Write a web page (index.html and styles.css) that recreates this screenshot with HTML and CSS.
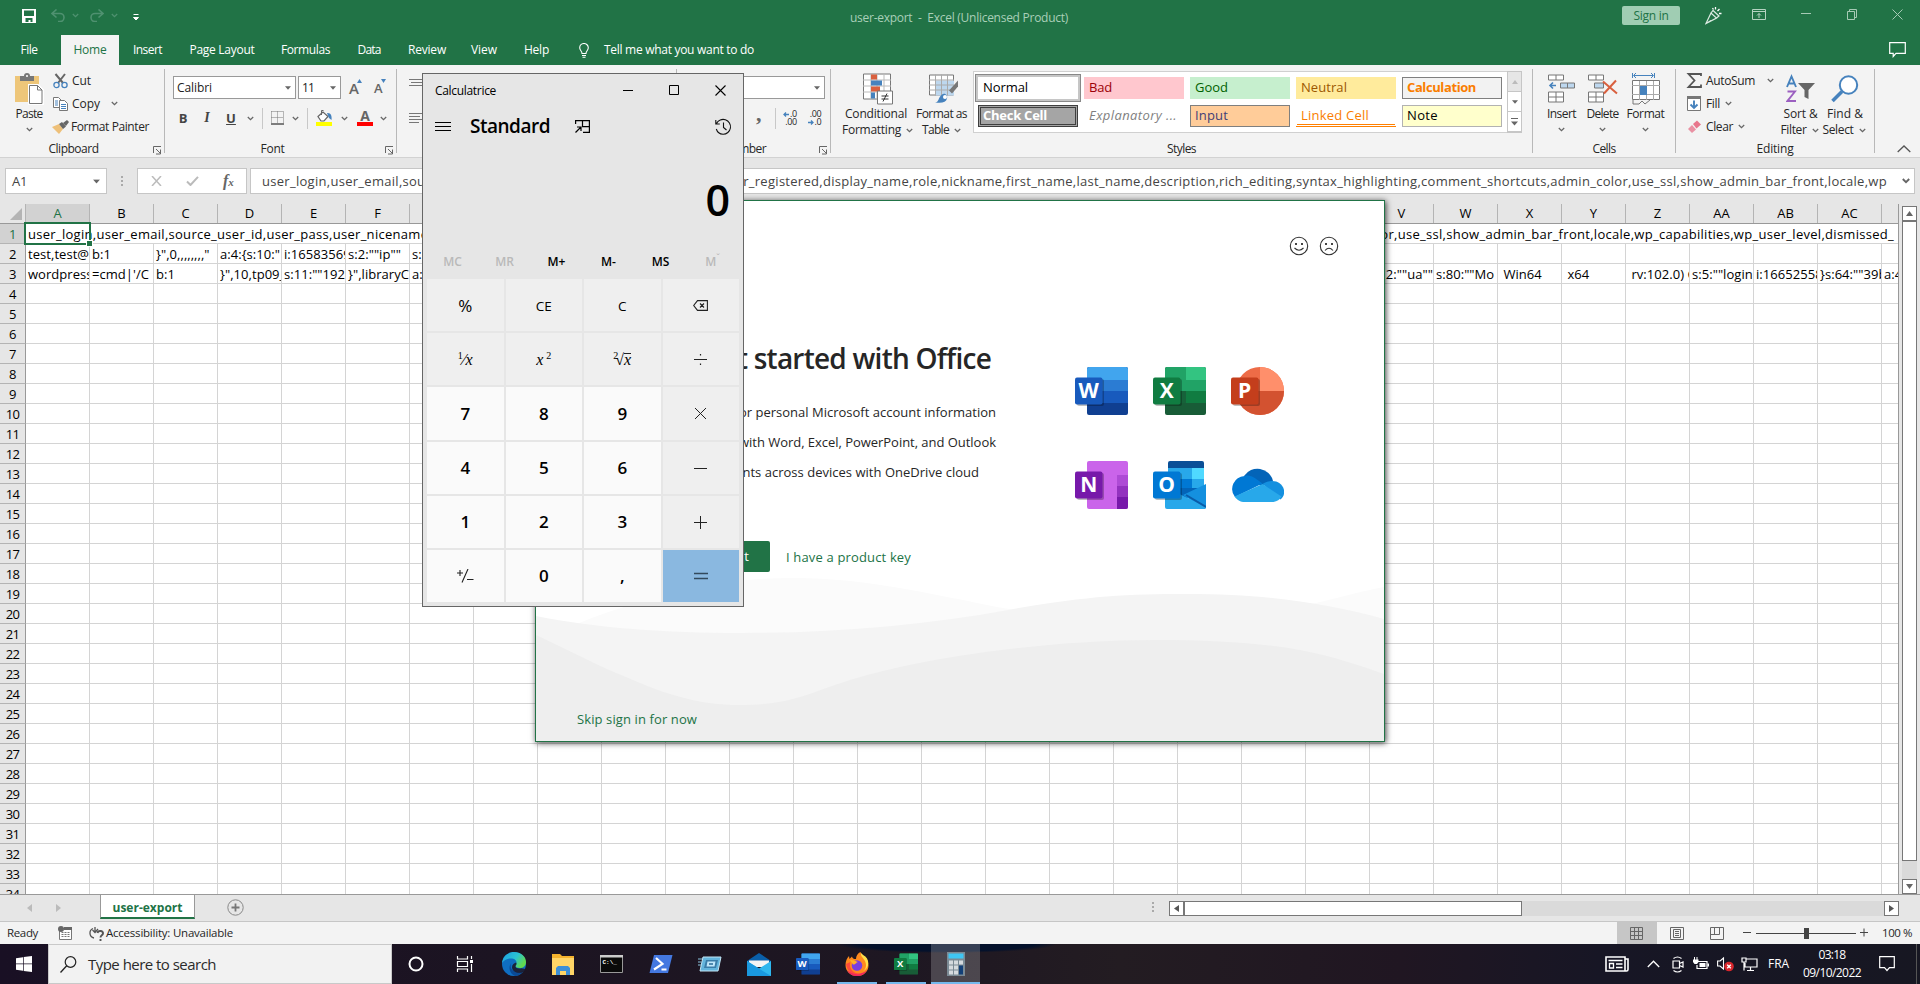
FILE: index.html
```html
<!DOCTYPE html>
<html lang="en">
<head>
<meta charset="utf-8">
<title>user-export - Excel</title>
<link rel="stylesheet" href="styles.css">
</head>
<body>
<svg class="defs" width="0" height="0">
  <symbol id="chev" viewBox="0 0 7 5"><path d="M.8 1l2.7 2.6L6.2 1" fill="none" stroke="currentColor" stroke-width="1.3"/></symbol>
  <symbol id="tri" viewBox="0 0 6 4"><path d="M0 .3h6L3 3.7z" fill="currentColor"/></symbol>
  <symbol id="launch" viewBox="0 0 9 9"><path d="M.5 7V.5H8M3 3l4 4M7.5 3.5v4.500h-4.500" fill="none" stroke="#666"/></symbol>
  <symbol id="word" viewBox="0 0 53 48"><rect x="12" width="41" height="48" rx="2" fill="#103f91"/><path d="M12 24h41v12H12z" fill="#185abd"/><path d="M12 12h41v12H12z" fill="#2b7cd3"/><path d="M14 0h37a2 2 0 012 2v11H12V2a2 2 0 012-2z" fill="#41a5ee"/><rect x="2" y="12" width="27" height="27" rx="2" fill="#000" opacity=".25"/><rect y="10.500" width="27.500" height="27" rx="2" fill="#185abd"/><text x="13.700" y="31" text-anchor="middle" class="logo">W</text></symbol>
  <symbol id="excel" viewBox="0 0 53 48"><rect x="12" width="41" height="48" rx="2" fill="#185c37"/><path d="M12 24h21v12H12z" fill="#17623a"/><path d="M33 24h20v12H33z" fill="#107c41"/><path d="M14 0h19v24H12V2a2 2 0 012-2z" fill="#21a366"/><path d="M33 13h20v11H33z" fill="#21a366"/><path d="M33 0h18a2 2 0 012 2v11H33z" fill="#33c481"/><rect x="2" y="12" width="27" height="27" rx="2" fill="#000" opacity=".25"/><rect y="10.500" width="27.500" height="27" rx="2" fill="#107c41"/><text x="13.700" y="31" text-anchor="middle" class="logo">X</text></symbol>
  <symbol id="ppt" viewBox="0 0 53 48"><circle cx="29" cy="24" r="24" fill="#ed6c47"/><path d="M29 0a24 24 0 0124 24H29z" fill="#ff8f6b"/><path d="M5 24h48a24 24 0 01-48 0z" fill="#d35230"/><rect x="2" y="12" width="27" height="27" rx="2" fill="#000" opacity=".25"/><rect y="10.500" width="27.500" height="27" rx="2" fill="#c43e1c"/><text x="13.700" y="31" text-anchor="middle" class="logo">P</text></symbol>
  <symbol id="onenote" viewBox="0 0 53 48"><rect x="12" width="41" height="48" rx="2" fill="#ca64ea"/><path d="M42 14h11v11H42z" fill="#ae4bd5"/><path d="M42 25h11v11H42z" fill="#9332bf"/><path d="M42 36h11v10a2 2 0 01-2 2h-9z" fill="#7719aa"/><rect x="2" y="12" width="27" height="27" rx="2" fill="#000" opacity=".25"/><rect y="10.500" width="27.500" height="27" rx="2" fill="#7719aa"/><text x="13.700" y="31" text-anchor="middle" class="logo">N</text></symbol>
  <symbol id="outlook" viewBox="0 0 53 48"><path d="M15 2a2 2 0 012-2h32a2 2 0 012 2v5H15z" fill="#0a4f97"/><path d="M15 7h24v11H15z" fill="#28a8ea"/><path d="M39 7h12v11H39z" fill="#50d9ff"/><path d="M15 18h24v9H15z" fill="#0078d4"/><path d="M39 18h12v9H39z" fill="#28a8ea"/><path d="M15 27h36v10H15z" fill="#0364b8"/><path d="M53 23v23a2 2 0 01-2 2L30 34z" fill="#1490df"/><path d="M12 26l41 20a2 2 0 01-2 2H14a2 2 0 01-2-2z" fill="#28a8ea"/><path d="M53 46L33 34" stroke="#0a5ca8" stroke-width="2"/><rect x="2" y="12" width="27" height="27" rx="2" fill="#000" opacity=".25"/><rect y="10.500" width="27.500" height="27" rx="2" fill="#0078d4"/><text x="13.700" y="31" text-anchor="middle" class="logo">O</text></symbol>
</svg>

<header class="titlebar">
  <div class="quick">
    <svg width="14" height="14" viewBox="0 0 14 14"><path d="M0 0h14v14H0z" fill="#fff"/><path d="M2 1.500h10V7H2zM3.500 9h7v4h-2v-2h-2v2h-3z" fill="#217346"/></svg>
    <svg class="undo" width="14" height="13" viewBox="0 0 14 13"><path d="M5.500.5L1 4.500l4.500 4M1.500 4.500H9a4 4 0 010 8H7" fill="none" stroke="#4f9170" stroke-width="1.600"/></svg>
    <svg class="undo-more" width="7" height="5"><use href="#chev"/></svg>
    <svg class="redo" width="14" height="13" viewBox="0 0 14 13"><path d="M8.500.5L13 4.500l-4.500 4M12.500 4.500H5a4 4 0 000 8h2" fill="none" stroke="#4f9170" stroke-width="1.600"/></svg>
    <svg class="undo-more" width="7" height="5"><use href="#chev"/></svg>
    <svg class="customize" width="6" height="7" viewBox="0 0 6 7"><path d="M.5.500h5M.500 3.500h5L3 6z" stroke="#fff" fill="#fff"/></svg>
  </div>
  <div class="doc-title"><span data-w="218">user-export&nbsp; -&nbsp; Excel (Unlicensed Product)</span></div>
  <div class="window-tools">
    <div class="signin"><span data-w="35">Sign in</span></div>
    <svg class="pen" width="17" height="18" viewBox="0 0 17 18"><path d="M1 16.500L6 6l5.500 5zM6 6l2-2.500 6 5.500-2.500 2M1 16.500l5-3" fill="none" stroke="#dcebe2" stroke-width="1.200"/><path d="M10.500 0v2.500M12.500 4l2-2M14 6.500h2.500M7.500 1l1 1.500" stroke="#fff" stroke-width="1.300"/></svg>
    <svg class="ribbon-opt" width="14" height="11" viewBox="0 0 14 11"><path d="M.5.500h13v10H.500zM.500 2.500h13M7 9V4.500M5 6.500l2-2 2 2" fill="none" stroke="#b5d3c1"/></svg>
    <svg class="min" width="10" height="2"><path d="M0 .5h10" stroke="#a6cab5"/></svg>
    <svg class="restore" width="11" height="11" viewBox="0 0 11 11"><path d="M.5 2.500h7v8h-7zM2.500 2.500V.5h7v8h-2" fill="none" stroke="#a6cab5"/></svg>
    <svg class="close" width="11" height="11" viewBox="0 0 11 11"><path d="M.5.500l10 10M10.500.500l-10 10" stroke="#a6cab5"/></svg>
  </div>
</header>

<nav class="tabs">
  <div class="tab t-file"><span data-w="17">File</span></div>
  <div class="tab t-home active"><span data-w="33">Home</span></div>
  <div class="tab t-insert"><span data-w="29">Insert</span></div>
  <div class="tab t-layout"><span data-w="65">Page Layout</span></div>
  <div class="tab t-formulas"><span data-w="49">Formulas</span></div>
  <div class="tab t-data"><span data-w="23">Data</span></div>
  <div class="tab t-review"><span data-w="38">Review</span></div>
  <div class="tab t-view"><span data-w="26">View</span></div>
  <div class="tab t-help"><span data-w="25">Help</span></div>
  <svg class="bulb" width="10" height="15" viewBox="0 0 10 15"><path d="M3 10.500C3 8 .7 7.500.7 4.800a4.300 4.300 0 018.600 0C9.300 7.500 7 8 7 10.500zM3 12.500h4M3.500 14.300h3" fill="none" stroke="#fff" stroke-width="1.100"/></svg>
  <span class="tellme" data-w="150">Tell me what you want to do</span>
  <svg class="comment" width="17" height="16" viewBox="0 0 17 16"><path d="M.7.700h15.600v10.600H7L4.200 14.500v-3.200H.700z" fill="none" stroke="#fff" stroke-width="1.200"/></svg>
</nav>

<section class="ribbon">
  <div class="group g-clip">
    <div class="body">
      <div class="big paste">
        <svg width="30" height="32" viewBox="0 0 30 32"><path d="M1 3h24v26H1z" fill="#eec679"/><path d="M6 3h4a3 3 0 016 0h4v5H6z" fill="#777"/><circle cx="13" cy="3" r="1" fill="#fff"/><path d="M15 12h9l5 5v14H15z" fill="#fff" stroke="#fff" stroke-width="2"/><path d="M15.500 12.500h8l4.500 4.500v13.500H15.500zM23.500 12.500V17H28" fill="#fff" stroke="#777"/></svg>
        <span data-w="27">Paste</span>
        <svg class="ch" width="7" height="5"><use href="#chev"/></svg>
      </div>
      <div class="stack">
        <div class="cmd"><svg width="15" height="16" viewBox="0 0 15 16"><path d="M2.500 1l7.500 9M12 1L5 10" stroke="#666" stroke-width="2"/><circle cx="3.500" cy="12" r="2.600" fill="none" stroke="#4682bd" stroke-width="1.300"/><circle cx="11.500" cy="12" r="2.600" fill="none" stroke="#4682bd" stroke-width="1.300"/></svg><span data-w="19">Cut</span></div>
        <div class="cmd"><svg width="15" height="14" viewBox="0 0 15 14"><path d="M.5.500h5l3 3v7h-8z" fill="#fff" stroke="#777"/><path d="M2 4h3M2 6h3M2 8h3" stroke="#4682bd"/><path d="M6.500 3.500h5l3 3v7h-8z" fill="#fff" stroke="#777"/><path d="M8 7.500h5M8 9.500h5M8 11.500h5" stroke="#4682bd"/></svg><span data-w="28">Copy</span><svg class="ch" width="7" height="5"><use href="#chev"/></svg></div>
        <div class="cmd"><svg width="17" height="14" viewBox="0 0 17 14"><path d="M0 7l7-3 4 5-4 5z" fill="#eec079"/><path d="M7 4l3-2 4 4.500-3 2.500zM11 3l4-3 2 2-3 4z" fill="#666"/></svg><span class="tight" data-w="78">Format Painter</span></div>
      </div>
    </div>
    <footer><span data-w="50">Clipboard</span><svg class="launch" width="9" height="9"><use href="#launch"/></svg></footer>
  </div>
  <div class="group g-font">
    <div class="body col">
      <div class="line l1">
        <div class="combo c-font"><span data-w="35">Calibri</span><svg width="6" height="4"><use href="#tri"/></svg></div>
        <div class="combo c-size"><span data-w="12">11</span><svg width="6" height="4"><use href="#tri"/></svg></div>
        <div class="glyph grow">A<svg width="5" height="4" viewBox="0 0 5 4"><path d="M0 4l2.500-4L5 4z" fill="#4682bd"/></svg></div>
        <div class="glyph shrink">A<svg width="5" height="4" viewBox="0 0 5 4"><path d="M0 0l2.500 4L5 0z" fill="#4682bd"/></svg></div>
      </div>
      <div class="line l2">
        <b class="bi">B</b><i class="bi">I</i><u class="bi">U</u>
        <svg class="ch" width="7" height="5"><use href="#chev"/></svg><hr>
        <svg width="13" height="14" viewBox="0 0 13 14"><path d="M.5.500h12M.500 6.500h12M.500.500v12M6.500.500v12M12.500.500v12" stroke="#777" stroke-dasharray="1 1"/><path d="M0 13h13" stroke="#555" stroke-width="1.500"/></svg>
        <svg class="ch" width="7" height="5"><use href="#chev"/></svg><hr>
        <svg width="17" height="16" viewBox="0 0 17 16"><path d="M2 6.500L7 2l5 4.500L8 11H5z" fill="#fff" stroke="#666" stroke-width="1.200"/><path d="M5.500 5V.5h2" fill="none" stroke="#666"/><path d="M11 3c4-.5 5 3 4.500 7L13 8z" fill="#4682bd"/><path d="M0 12h16v4H0z" fill="#ff0"/></svg>
        <svg class="ch" width="7" height="5"><use href="#chev"/></svg>
        <div class="fontcolor">A</div>
        <svg class="ch" width="7" height="5"><use href="#chev"/></svg>
      </div>
    </div>
    <footer><span data-w="24">Font</span><svg class="launch" width="9" height="9"><use href="#launch"/></svg></footer>
  </div>
  <div class="group g-align">
    <svg width="40" height="60" viewBox="0 0 40 60"><path d="M0 10.500h40M2 13.500h38M0 16.500h40M0 44.500h40M0 47.500h11M0 50.500h40M0 53.500h10" stroke="#777"/></svg>
  </div>
  <div class="group g-number">
    <div class="body col">
      <div class="line l1"><div class="combo c-num"><span></span><svg width="6" height="4"><use href="#tri"/></svg></div></div>
      <div class="line l2"><span class="comma">,</span><hr>
        <div class="dec"><span><svg width="6" height="5" viewBox="0 0 6 5"><path d="M6 2.500H1M3 .5l-2 2 2 2" fill="none" stroke="#4682bd" stroke-width="1.300"/></svg>.0</span><span>.00</span></div>
        <div class="dec"><span>.00</span><span><svg width="6" height="5" viewBox="0 0 6 5"><path d="M0 2.500h5M3 .5l2 2-2 2" fill="none" stroke="#4682bd" stroke-width="1.300"/></svg>.0</span></div>
      </div>
    </div>
    <footer><span data-w="43">Number</span><svg class="launch" width="9" height="9"><use href="#launch"/></svg></footer>
  </div>
  <div class="group g-styles">
    <div class="body">
      <div class="big condf">
        <svg width="30" height="31" viewBox="0 0 30 31"><path d="M.5.500h27v25H.500z" fill="#fff" stroke="#777"/><path d="M0 6.500h28M0 12.500h28M0 18.500h28M8 0v26M14 0v26M21 0v26" stroke="#bbb"/><path d="M8 1h6v5H8zM8 13h9v5H8z" fill="#d9603f"/><path d="M8 7h11v5H8zM8 19h4v6H8z" fill="#4682bd"/><path d="M14.500 17.500h15v13h-15z" fill="#fff" stroke="#777"/><path d="M18.500 22.500h7M18.500 25.500h7M24 20l-4 8" stroke="#333"/></svg>
        <span data-w="62">Conditional</span><span class="second"><span data-w="59">Formatting</span><svg class="ch" width="7" height="5"><use href="#chev"/></svg></span>
      </div>
      <div class="big fmtt">
        <svg width="30" height="29" viewBox="0 0 30 29"><path d="M.5.500h24v20H.500z" fill="#fff" stroke="#777"/><path d="M7 6h18v15H7z" fill="#bdd7ee"/><path d="M0 5.500h25M0 10.500h25M0 15.500h25M6.500 0v21M12.500 0v21M18.500 0v21" stroke="#aaa"/><path d="M29 6v6l-6 7-3-3z" fill="#777"/><path d="M6 28c4 0 3-5 7-8 3-2 6 1 5 4-1 4-5 5-12 4z" fill="#4682bd"/><circle cx="16" cy="22.500" r="2" fill="#fff"/></svg>
        <span data-w="51">Format as</span><span class="second"><span data-w="27">Table</span><svg class="ch" width="7" height="5"><use href="#chev"/></svg></span>
      </div>
      <div class="gallery">
        <div class="swatches">
          <div class="sw s-normal"><span data-w="45">Normal</span></div><div class="sw s-bad"><span data-w="23">Bad</span></div><div class="sw s-good"><span data-w="33">Good</span></div><div class="sw s-neutral"><span data-w="46">Neutral</span></div><div class="sw s-calc"><span data-w="69">Calculation</span></div>
          <div class="sw s-check"><span data-w="64">Check Cell</span></div><div class="sw s-expl"><span data-w="88">Explanatory ...</span></div><div class="sw s-input"><span data-w="33">Input</span></div><div class="sw s-linked"><span data-w="68">Linked Cell</span></div><div class="sw s-note"><span data-w="31">Note</span></div>
        </div>
        <div class="gal-scroll">
          <div class="dis"><svg width="6" height="4"><path d="M0 4l3-4 3 4z" fill="#bbb"/></svg></div>
          <div><svg width="6" height="4"><use href="#tri"/></svg></div>
          <div><svg width="7" height="8"><path d="M0 .5h7" stroke="#666"/><path d="M0 3.500h7L3.500 7.500z" fill="#666"/></svg></div>
        </div>
      </div>
    </div>
    <footer><span data-w="29">Styles</span></footer>
  </div>
  <div class="group g-cells">
    <div class="body">
      <div class="big w41"><svg width="27" height="29" viewBox="0 0 27 29"><path d="M.5.500h15v5H.500zM8 .5v5M.500 17.500h15v10H.500zM8 17.500v10M.500 22.500h15" fill="#fff" stroke="#777"/><path d="M12.500 8.500h14v5h-14zM19.500 8.500v5" fill="#bdd7ee" stroke="#777"/><path d="M2 11h6M5 8l-3 3 3 3" fill="none" stroke="#4682bd" stroke-width="1.600"/></svg><span data-w="29">Insert</span><svg class="ch" width="7" height="5"><use href="#chev"/></svg></div>
      <div class="big w41"><svg width="30" height="29" viewBox="0 0 30 29"><path d="M.5.500h15v5H.500zM8 .5v5M.500 17.500h15v10H.500zM8 17.500v10M.500 22.500h15" fill="#fff" stroke="#777"/><path d="M6.500 8.500h9v5h-9z" fill="#bdd7ee" stroke="#777"/><path d="M15 7l14 12M28 6L16 19" stroke="#d9603f" stroke-width="2"/></svg><span data-w="32">Delete</span><svg class="ch" width="7" height="5"><use href="#chev"/></svg></div>
      <div class="big w43"><svg width="28" height="32" viewBox="0 0 28 32"><path d="M.5 0v5M22.500 0v5M2 2.500h19M4 0L1.500 2.500 4 5M19 0l2.500 2.500L19 5" fill="none" stroke="#4682bd"/><path d="M.5 7.500h27v19H.500z" fill="#fff" stroke="#777"/><path d="M0 12.500h28M0 21.500h28M7.500 8v19M14.500 8v19M21.500 8v19" stroke="#aaa"/><path d="M8 13h7v9H8z" fill="#4682bd"/><path d="M1 27v4h6l3-3 3 3 5-4" fill="none" stroke="#777"/></svg><span data-w="38">Format</span><svg class="ch" width="7" height="5"><use href="#chev"/></svg></div>
    </div>
    <footer><span data-w="23">Cells</span></footer>
  </div>
  <div class="group g-edit">
    <div class="body">
      <div class="stack">
        <div class="cmd"><svg width="15" height="15" viewBox="0 0 15 15"><path d="M14 3V1H1.500l6 6.500-6 6.500H14v-2.500" fill="none" stroke="#555" stroke-width="1.800"/></svg><span data-w="49">AutoSum</span><svg class="ch far" width="7" height="5"><use href="#chev"/></svg></div>
        <div class="cmd"><svg width="15" height="15" viewBox="0 0 15 15"><path d="M.5.500h13v14H.500z" fill="#fff" stroke="#777"/><path d="M0 0h14v3H0z" fill="#777"/><path d="M7 4.500V12M3.500 8.500L7 12l3.500-3.500" fill="none" stroke="#4682bd" stroke-width="1.900"/></svg><span data-w="14">Fill</span><svg class="ch near" width="7" height="5"><use href="#chev"/></svg></div>
        <div class="cmd"><svg width="15" height="14" viewBox="0 0 15 14"><path d="M6 4l4-3.500 4 4L9.500 8.500z" fill="#e8768c"/><path d="M1 9l4-4 4 4.500L5 13z" fill="#e991a3"/></svg><span data-w="27">Clear</span><svg class="ch near" width="7" height="5"><use href="#chev"/></svg></div>
      </div>
      <div class="big sortf"><svg width="30" height="28" viewBox="0 0 30 28"><path d="M1 12L5.500 1.500 10 12M2.500 8.500h6" fill="none" stroke="#4682bd" stroke-width="1.900"/><path d="M1.500 16.500H9L1.500 26H10" fill="none" stroke="#9b5fc0" stroke-width="1.900"/><path d="M12 8h17l-6.500 7v9l-4-2v-7z" fill="#666"/></svg><span data-w="34">Sort &amp;</span><span class="second"><span data-w="26">Filter</span><svg class="ch" width="7" height="5"><use href="#chev"/></svg></span></div>
      <div class="big findf"><svg width="28" height="28" viewBox="0 0 28 28"><circle cx="17.500" cy="10" r="8.700" fill="#fff" stroke="#4682bd" stroke-width="2"/><path d="M11 16.500L1.500 26" stroke="#4682bd" stroke-width="3.500"/></svg><span data-w="36">Find &amp;</span><span class="second"><span data-w="31">Select</span><svg class="ch" width="7" height="5"><use href="#chev"/></svg></span></div>
    </div>
    <footer><span data-w="37">Editing</span></footer>
  </div>
  <svg class="collapse" width="14" height="8" viewBox="0 0 14 8"><path d="M.700 7L7 1l6.300 6" fill="none" stroke="#555" stroke-width="1.300"/></svg>
</section>

<section class="formulabar">
  <div class="namebox"><span data-w="15">A1</span><svg width="7" height="5" viewBox="0 0 6 4"><use href="#tri"/></svg></div>
  <div class="dots"></div>
  <div class="fxbox">
    <svg width="11" height="10" viewBox="0 0 11 10"><path d="M1 0l9 10M10 0L1 10" stroke="#bbb" stroke-width="1.500"/></svg>
    <svg width="13" height="10" viewBox="0 0 13 10"><path d="M1 5.500L4.500 9 12 .8" fill="none" stroke="#bbb" stroke-width="2"/></svg>
    <span class="fx">f<small>x</small></span>
  </div>
  <div class="finput"><div class="ftext"><span class="headline"></span></div><svg width="8" height="6" viewBox="0 0 8 6"><path d="M.8 1L4 4.200 7.200 1" fill="none" stroke="#666" stroke-width="1.900"/></svg></div>
</section>

<main class="sheet">
  <div class="gridwrap">
    <div class="colheads"><div class="corner"><svg width="12" height="12"><path d="M12 0v12H0z" fill="#b4b4b4"/></svg></div></div>
    <div class="rows"></div>
    <div class="selection"></div>
  </div>
  <div class="vscroll">
    <div class="sbtn"><svg width="7" height="5"><path d="M0 5l3.500-5L7 5z" fill="#666"/></svg></div>
    <div class="vthumb"></div><div class="fill"></div>
    <div class="sbtn"><svg width="7" height="5"><path d="M0 0l3.500 5L7 0z" fill="#666"/></svg></div>
  </div>
</main>

<section class="sheetbar">
  <svg class="arr a1" width="5" height="8"><path d="M5 0L0 4l5 4z" fill="#bbb"/></svg>
  <svg class="arr a2" width="5" height="8"><path d="M0 0l5 4-5 4z" fill="#bbb"/></svg>
  <div class="sheettab"><span data-w="70">user-export</span></div>
  <svg class="plus" width="17" height="17" viewBox="0 0 17 17"><circle cx="8.500" cy="8.500" r="7.700" fill="none" stroke="#888"/><path d="M4.500 8.500h8M8.500 4.500v8" stroke="#777" stroke-width="1.800"/></svg>
  <div class="dots hdots"></div>
  <div class="hscroll">
    <div class="sbtn"><svg width="5" height="7"><path d="M5 0L0 3.500 5 7z" fill="#555"/></svg></div>
    <div class="hthumb"></div><div class="fill"></div>
    <div class="sbtn"><svg width="5" height="7"><path d="M0 0l5 3.500L0 7z" fill="#555"/></svg></div>
  </div>
</section>

<section class="status">
  <span class="ready" data-w="31">Ready</span>
  <svg class="macro" width="14" height="14" viewBox="0 0 14 14"><path d="M1.500 2.500h12v11h-12z" fill="#fff" stroke="#777"/><path d="M6 1h8v3H6z" fill="#666"/><path d="M3.500 6.500h8M3.500 8.500h8M3.500 10.500h8" stroke="#777" stroke-dasharray="2 1"/><circle cx="3" cy="3" r="3" fill="#666"/></svg>
  <svg class="acc" width="17" height="15" viewBox="0 0 17 15"><path d="M5 2.500A5 5 0 006 12M7 1v5M4.500 4L7 6.500 10 3" fill="none" stroke="#555" stroke-width="1.300"/><path d="M9.500 7c.5-3 6-2.500 5.500.5-.3 2-2.500 1.500-2.500 4M12.500 13v2" fill="none" stroke="#555" stroke-width="1.900"/></svg>
  <span class="acct" data-w="127">Accessibility: Unavailable</span>
  <div class="views">
    <div class="on"><svg width="14" height="13" viewBox="0 0 14 13"><path d="M.5.500h12v12H.500zM4.500.500v12M8.500.500v12M.500 4.500h12M.500 8.500h12" fill="none" stroke="#666"/></svg></div>
    <div><svg width="14" height="13" viewBox="0 0 14 13"><path d="M.5.500h13v12H.500zM3.500 2.500h7v8h-7zM5 4.500h4M5 6.500h4M5 8.500h4" fill="none" stroke="#666"/></svg></div>
    <div><svg width="14" height="13" viewBox="0 0 14 13"><path d="M.5.500h13v12H.500zM.500 7.500h9M4.500.500v7M9.500.500v7" fill="none" stroke="#666"/></svg></div>
  </div>
  <svg class="zoomer" width="126" height="13" viewBox="0 0 126 13"><path d="M0 5.500h8M13 6.500h100M117 5.500h8M121 1.500v8" stroke="#444"/><path d="M61 1h5v11h-5z" fill="#444"/></svg>
  <span class="pct" data-w="30">100 %</span>
</section>

<footer class="taskbar">
  <div class="start"><svg width="16" height="16" viewBox="0 0 16 16"><path d="M0 2.200l7-1v6.300H0zM7.700 1L16 0v7.500H7.700zM0 8.300h7v6.500l-7-1zM7.700 8.300H16V16l-8.300-1.100z" fill="#fff"/></svg></div>
  <div class="search"><svg width="17" height="17" viewBox="0 0 17 17"><circle cx="10.500" cy="6" r="5.300" fill="none" stroke="#222" stroke-width="1.200"/><path d="M6.700 9.800L.5 16.500" stroke="#222" stroke-width="1.300"/></svg><span data-w="128">Type here to search</span></div>
  <div class="app"><svg width="16" height="16"><circle cx="8" cy="8" r="6.500" fill="none" stroke="#fff" stroke-width="2"/></svg></div>
  <div class="app"><svg width="18" height="16" viewBox="0 0 18 16"><path d="M1.500 0v3h10V0M1.500 16v-3h10v3M1.500 5.500h10v5h-10zM15.500 0v3M15.500 8v8" fill="none" stroke="#fff" stroke-width="1.200"/><path d="M14 4h3v3h-3z" fill="#fff"/></svg></div>
  <div class="app"><svg width="24" height="24" viewBox="0 0 24 24"><defs><linearGradient id="eg" x1="0" y1="0" x2="1" y2=".5"><stop offset="0" stop-color="#1b9de2"/><stop offset=".6" stop-color="#2bc3d2"/><stop offset="1" stop-color="#62d94e"/></linearGradient></defs><circle cx="12" cy="12" r="12" fill="#0f6ec2"/><path d="M0 11.500C.5 4 6 0 12 0c7 0 12 4.500 12 10 0 4-3 6-6 6s-4.500-1-4.500-2c0-1 1-1.500 1-3.500C14.500 8 12 6.500 9 6.500c-5 0-8.500 3-9 5z" fill="url(#eg)"/><path d="M9.500 11c-2.500 3 0 9 6 9 2.500 0 4.500-.7 6-1.600-1 2.500-4 5-8 5.500C8 22.500 5.500 15 9.500 11z" fill="#0a4a96"/><path d="M14 10.500c1.500 2-.5 2.700-.5 4 0 1.500 3 2.500 6 1.700l4 .8-2 3c-5 2-11 .5-11.500-4.500-.2-2.500 2-4.500 4-5z" fill="#1d1522" opacity=".85"/></svg></div>
  <div class="app"><svg width="22" height="21" viewBox="0 0 22 21"><path d="M0 0h8l2 2h12v19H0z" fill="#f5b32e"/><path d="M0 4h22v17H0z" fill="#ffd567"/><path d="M4 21v-7l2-2h10l2 2v7h-4v-4H8v4z" fill="#3d8fd6"/></svg></div>
  <div class="app"><svg width="24" height="18" viewBox="0 0 24 18"><path d="M.5.500h22v17H.500z" fill="#0a0a0a" stroke="#999"/><path d="M0 0h23v2.500H0z" fill="#ccc"/><text x="2.500" y="8.500" class="cmdtxt">C:\_</text></svg></div>
  <div class="app"><svg width="24" height="18" viewBox="0 0 24 18"><path d="M5 0h18.500L19 18H.500z" fill="#4478e0"/><path d="M7 3l6.500 5.800L5 14.500M12.500 14.500h5" fill="none" stroke="#fff" stroke-width="2.200"/></svg></div>
  <div class="app"><svg width="24" height="16" viewBox="0 0 24 16"><path d="M5 1h18l-3 14H2z" fill="#63b4dc" stroke="#c2e5f5"/><path d="M8 4h12l-2 8H6z" fill="#3a7da9"/><path d="M9.500 5.500h8l-1 5h-8z" fill="#bfe6fa"/><path d="M11 8h4" stroke="#2b6b97" stroke-width="1.500"/><path d="M0 3h4M0 6h3.500M0 9h3" stroke="#8dc6e0"/></svg></div>
  <div class="app"><svg width="24" height="23" viewBox="0 0 24 23"><path d="M0 8l12-8 12 8v6H0z" fill="#0a5fa9"/><path d="M2 7.500h20V14H2z" fill="#f4f4f4"/><path d="M0 8l12 7.500L24 8v15H0z" fill="#2fb7ee"/><path d="M0 8l24 15H0z" fill="#1a98df"/></svg></div>
  <div class="app"><svg width="24" height="22" viewBox="0 0 53 48"><use href="#word" width="53" height="48"/></svg></div>
  <div class="app run"><svg width="24" height="24" viewBox="0 0 24 24"><path d="M12 24C5 24 .5 19 .5 13 .5 9 2 6 4 4l.5 3L7 4.500c.5 2 1.500 2.500 4 2.500 0-3 2-6 4.500-7C16 3 23.500 6 23.500 13.500 23.500 19 19 24 12 24z" fill="#ff8a1e"/><path d="M2 18c3 7.500 16 9 20 0-5 5-14 5-20 0z" fill="#f0265f"/><path d="M1 12c1 9 9 11.500 15 10-5 0-10-2.500-11-8-.3-2 .5-4 .5-4z" fill="#ff4a3c"/><path d="M16 1c-1 4 5 6 5 12 0 3-1 5-3 6 6-2 8-12 0-16z" fill="#ffe04a"/><circle cx="12" cy="13.500" r="5.300" fill="#7a3fe0"/><path d="M5 8c4 0 5 1 8 2-2 .5-2 2.500-5 2.500z" fill="#ffb326"/></svg></div>
  <div class="app run"><svg width="24" height="22" viewBox="0 0 53 48"><use href="#excel" width="53" height="48"/></svg></div>
  <div class="app run current"><svg width="18" height="24" viewBox="0 0 18 24"><path d="M0 0h18v24H0z" fill="#7b8a94"/><path d="M1.500 1.500h15v5h-15z" fill="#3fc6f3"/><path d="M2 8.500h4v4H2zM7 8.500h4v4H7zM12 8.500h4v4h-4zM2 13.500h4v4H2zM7 13.500h4v4H7zM2 18.500h4v4H2zM7 18.500h4v4H7z" fill="#d5dade"/><path d="M12 13.500h4v9h-4z" fill="#123f77"/></svg></div>
  <div class="tray">
    <svg class="news" width="24" height="16" viewBox="0 0 24 16"><path d="M1 1h19v14H1zM20 3h3v10.500c0 1-.5 1.500-1.500 1.500H20" fill="none" stroke="#fff" stroke-width="1.600"/><path d="M3.500 4.500h14M11 8h6.500M11 11.500h6.500" stroke="#fff" stroke-width="1.300"/><path d="M4.500 7.500h4v4.500h-4z" fill="none" stroke="#fff" stroke-width="1.300"/></svg>
    <svg class="t1" width="13" height="8" viewBox="0 0 13 8"><path d="M.8 7L6.500 1.200 12.200 7" fill="none" stroke="#fff" stroke-width="1.300"/></svg>
    <svg class="t2" width="12" height="17" viewBox="0 0 12 17"><path d="M1 5h6.500v7H1zM7.500 7.500L11 6v5L7.500 9.500M1.500 2.500q4-3 8 0M1.500 14.500q4 3 8 0" fill="none" stroke="#fff" stroke-width="1.200"/></svg>
    <svg class="t3" width="16" height="14" viewBox="0 0 16 14"><path d="M5 4.500h9v7H4V8" fill="none" stroke="#fff" stroke-width="1.200"/><path d="M6.500 6h6v4h-6zM14.500 6.500H16v3h-1.500zM0 2.500h5.500V5L4 7H1.500L0 5zM1 0h1v3H1zM3.500 0h1v3h-1z" fill="#fff"/></svg>
    <svg class="t4" width="17" height="16" viewBox="0 0 17 16"><path d="M.6 5h2.500L6.500 2v11L3 10H.600z" fill="none" stroke="#fff" stroke-width="1.100"/><circle cx="12" cy="10.500" r="4.800" fill="#d8262c"/><path d="M10.200 8.700l3.600 3.600M13.800 8.700l-3.600 3.600" stroke="#fff" stroke-width="1.300"/></svg>
    <svg class="t5" width="17" height="15" viewBox="0 0 17 15"><path d="M5 2h11v8H4V6M1 1h4v4H1zM3 5v8.500M9.500 10v3M6 13.500h7" fill="none" stroke="#fff" stroke-width="1.200"/></svg>
    <span class="lang" data-w="21">FRA</span>
    <div class="clock"><span data-w="27">03:18</span><span data-w="58">09/10/2022</span></div>
    <svg class="notif" width="16" height="16" viewBox="0 0 16 16"><path d="M.7.700h14.600v11H10.500L8 14.500 5.500 11.700H.700z" fill="none" stroke="#fff" stroke-width="1.200"/></svg>
  </div>
</footer>

<section class="dialog">
  <svg class="waves" width="848" height="170" viewBox="0 0 848 170"><path d="M0 75C30 55 60 45 85 37C140 15 200 7 259 7C330 7 400 24 461 36C510 45 560 49 618 49C690 49 740 40 770 34C800 28 825 20 848 16V170H0z" fill="#fbfbfb"/><path d="M0 45C60 57 130 62 205 62C300 62 390 54 472 39C550 25 590 23 651 23C730 23 790 32 848 48V170H0z" fill="#f4f4f4"/><path d="M0 64C35 80 60 94 90 106C130 124 165 134 203 134C260 134 275 120 321 107C400 84 520 69 618 69C680 69 725 72 764 79C800 86 825 95 848 103V170H0z" fill="#eee"/></svg>
  <div class="faces">
    <svg width="20" height="20" viewBox="0 0 20 20"><circle cx="10" cy="10" r="8.700" fill="none" stroke="#333" stroke-width="1.100"/><path d="M6 7h2v2H6zM12 7h2v2h-2z" fill="#444"/><path d="M5.500 12q4.500 4.500 9 0" fill="none" stroke="#333" stroke-width="1.100"/></svg>
    <svg width="20" height="20" viewBox="0 0 20 20"><circle cx="10" cy="10" r="8.700" fill="none" stroke="#333" stroke-width="1.100"/><path d="M6 7h2v2H6zM12 7h2v2h-2z" fill="#444"/><path d="M6 14.500q4-4.500 8 0" fill="none" stroke="#333" stroke-width="1.100"/></svg>
  </div>
  <div class="pitch">
    <h1><span data-w="289">Get started with Office</span></h1>
    <p class="p1"><span data-w="257">or personal Microsoft account information</span></p>
    <p class="p2"><span data-w="257">with Word, Excel, PowerPoint, and Outlook</span></p>
    <p class="p3"><span data-w="286">documents across devices with OneDrive cloud</span></p>
    <div class="actions"><div class="go">Start</div><a data-w="125">I have a product key</a></div>
  </div>
  <div class="logos">
    <svg width="53" height="48"><use href="#word"/></svg><svg width="53" height="48"><use href="#excel"/></svg><svg width="53" height="48"><use href="#ppt"/></svg>
    <svg width="53" height="48"><use href="#onenote"/></svg><svg width="53" height="48"><use href="#outlook"/></svg>
    <svg width="53" height="48" viewBox="0 0 53 48"><path d="M13 15a16 16 0 0129 5l-12 5z" fill="#0364b8"/><path d="M4 36A13 13 0 0113.500 15c7-2 11 3 18 7.500z" fill="#0078d4"/><path d="M31.500 23c8-5 19-4 21.500 6 .6 5-1 7-3.500 9.500z" fill="#1490df"/><path d="M3.500 35.500l28-12.500 19 12.500a11 11 0 01-8 5.500H14c-5 0-8-2-10.500-5.500z" fill="#28a8ea"/></svg>
  </div>
  <a class="skip"><span data-w="120">Skip sign in for now</span></a>
</section>

<section class="calc">
  <div class="ctitle"><span data-w="61">Calculatrice</span>
    <svg width="10" height="10" viewBox="0 0 10 10"><path d="M0 5.500h10" stroke="#000"/></svg>
    <svg width="10" height="10" viewBox="0 0 10 10"><path d="M.5.500h9v9h-9z" fill="none" stroke="#000"/></svg>
    <svg width="11" height="11" viewBox="0 0 11 11"><path d="M.5.500l10 10M10.500.500l-10 10" stroke="#000" stroke-width="1.100"/></svg>
  </div>
  <div class="cmode">
    <svg width="16" height="9" viewBox="0 0 16 9"><path d="M0 .5h16M0 4.500h16M0 8.500h16" stroke="#000"/></svg>
    <b data-w="80">Standard</b>
    <svg class="ontop" width="15" height="13" viewBox="0 0 15 13"><path d="M.6 4V.6h13.800v11.800H8M7.500.600v6h7M.5 12.500L6 7M2 7h4v4" fill="none" stroke="#000" stroke-width="1.200"/></svg>
    <svg class="hist" width="17" height="17" viewBox="0 0 17 17"><path d="M.8 2v4h4M1.500 5.500A7.400 7.400 0 118 16.200 7.400 7.400 0 011.300 11M8.500 4.500v5l3 2.500" fill="none" stroke="#111" stroke-width="1.100"/></svg>
  </div>
  <div class="cdisplay">0</div>
  <div class="cmem"><span class="off">MC</span><span class="off">MR</span><span>M+</span><span>M-</span><span>MS</span><span class="off">M<sup>ˇ</sup></span></div>
  <div class="keys">
    <div class="k op pc">%</div><div class="k op">CE</div><div class="k op">C</div>
    <div class="k op"><svg width="15" height="11" viewBox="0 0 15 11"><path d="M4.500.600h9.900v9.800H4.500L.700 5.500zM7 3.500l4 4M11 3.500l-4 4" fill="none" stroke="#222" stroke-width="1.100"/></svg></div>
    <div class="k op math"><sup>1</sup>⁄<i>x</i></div><div class="k op math"><i>x</i><sup class="pow">2</sup></div><div class="k op math"><sup class="idx">2</sup>√<i class="over">x</i></div>
    <div class="k op"><svg width="13" height="13" viewBox="0 0 13 13"><path d="M0 6.500h13M6.500 1v1.500M6.500 10.500V12" stroke="#222" stroke-width="1.200"/></svg></div>
    <div class="k">7</div><div class="k">8</div><div class="k">9</div>
    <div class="k op"><svg width="13" height="13" viewBox="0 0 13 13"><path d="M1 1l11 11M12 1L1 12" stroke="#222"/></svg></div>
    <div class="k">4</div><div class="k">5</div><div class="k">6</div>
    <div class="k op"><svg width="13" height="13" viewBox="0 0 13 13"><path d="M0 6.500h13" stroke="#222"/></svg></div>
    <div class="k">1</div><div class="k">2</div><div class="k">3</div>
    <div class="k op"><svg width="13" height="13" viewBox="0 0 13 13"><path d="M0 6.500h13M6.500 0v13" stroke="#222"/></svg></div>
    <div class="k"><svg width="17" height="14" viewBox="0 0 17 14"><path d="M0 4h6M3 1v6M11 0L5 13.500M10 10.500h6.500" stroke="#222" stroke-width="1.100"/></svg></div><div class="k">0</div><div class="k">,</div>
    <div class="k eq"><svg width="14" height="8" viewBox="0 0 14 8"><path d="M0 1.500h14M0 6.500h14" stroke="#33495c" stroke-width="1.500"/></svg></div>
  </div>
</section>
<script src="app.js"></script>
</body>
</html>
```
FILE: styles.css
```css
* { box-sizing: border-box; }
body { margin: 0; width: 1920px; height: 984px; overflow: hidden; display: flex; flex-direction: column; position: relative; font: 12px/16px "Open Sans", "Noto Sans", sans-serif; color: #262626; background: #e6e6e6; }
svg { display: block; flex: none; }
span, a, b[data-w] { white-space: nowrap; }
[data-w] { display: inline-block; flex: none; }
.defs { position: absolute; }
.logo { font: 700 21px "Open Sans", sans-serif; fill: #fff; }
.ch { color: #666; }

/* title bar */
.titlebar { height: 35px; flex: none; background: #217346; display: flex; color: #a9cfb8; }
.quick { width: 850px; display: flex; align-items: flex-start; padding: 9px 0 0 22px; }
.undo { margin-left: 15px; }
.undo-more { margin: 4px 0 0 7px; color: #4f9170; }
.redo { margin-left: 11px; }
.customize { margin: 5px 0 0 15px; }
.doc-title { padding-top: 10px; width: 772px; }
.window-tools { display: flex; }
.signin { width: 58px; height: 19px; margin-top: 6px; background: #a0cdb3; color: #217346; border-radius: 2px; text-align: center; line-height: 19px; }
.pen { margin: 7px 0 0 25px; }
.ribbon-opt { margin: 9px 0 0 30px; }
.min { margin: 13px 0 0 35px; }
.restore { margin: 9px 0 0 36px; }
.close { margin: 9px 0 0 34px; }

/* tabs */
.tabs { height: 30px; flex: none; background: #217346; color: #fff; display: flex; align-items: center; }
.tab { height: 30px; line-height: 30px; text-align: center; }
.tab.active { background: #f3f3f3; color: #217346; }
.t-file { width: 58px; margin-right: 3px; }
.t-home { width: 58px; }
.t-insert { width: 57px; }
.t-layout { width: 92px; }
.t-formulas { width: 75px; }
.t-data { width: 52px; }
.t-review { width: 64px; }
.t-view { width: 50px; }
.t-help { width: 55px; }
.bulb { margin-left: 15px; }
.tellme { margin-left: 15px; }
.comment { margin: 0 14px 0 auto; }

/* ribbon */
.ribbon { height: 93px; flex: none; background: #f3f3f3; border-bottom: 1px solid #d2d2d2; display: flex; padding-top: 4px; }
.group { height: 84px; flex: none; border-right: 1px solid #b8b8b8; display: flex; flex-direction: column; }
.group .body { height: 71px; flex: none; display: flex; }
.group .body.col { flex-direction: column; }
.group footer { height: 18px; display: flex; justify-content: center; align-items: center; position: relative; top: 1px; }
.launch { position: absolute; right: 2px; top: 5px; }
.g-clip { width: 165px; }
.g-font { width: 232px; }
.g-align { width: 280px; padding-left: 12px; }
.g-number { width: 154px; }
.g-styles { width: 702px; }
.g-cells { width: 143px; }
.g-edit { width: 199px; }
.g-clip footer { padding-right: 17px; }
.g-font footer { padding-right: 16px; }
.g-number footer { padding-right: 18px; }
.big { display: flex; flex-direction: column; align-items: center; }
.big > svg:first-child { height: 32px; margin-top: 4px; }
.big > span { height: 16px; margin-top: 0; }
.big > svg + span { margin-top: 1px; }
.big > .ch { margin-top: 5px; }
.second { display: flex; align-items: center; gap: 5px; }
.paste { width: 28px; margin-left: 15px; }
.stack { display: flex; flex-direction: column; }
.cmd { height: 23px; display: flex; align-items: center; }
.g-clip .stack { margin-left: 9px; }
.cmd > svg:first-child { width: 17px; margin-right: 3px; }
.cmd > .tight { margin-left: -1px; }
.cmd .ch { margin-left: 11px; }
.cmd .ch.near { margin-left: 5px; }
.line { display: flex; align-items: center; }
.l1 { height: 23px; margin-top: 7px; }
.l2 { height: 24px; margin-top: 7px; }
.combo { height: 23px; background: #fff; border: 1px solid #999; display: flex; align-items: center; justify-content: space-between; padding: 0 4px 0 3px; color: #222; }
.combo svg { color: #666; }
.c-font { width: 123px; margin-left: 8px; }
.c-size { width: 43px; margin-left: 2px; }
.glyph { position: relative; font: 600 15px/20px "Open Sans", sans-serif; color: #666; }
.glyph svg { position: absolute; right: -3px; top: 1px; }
.grow { margin-left: 8px; }
.shrink { margin-left: 15px; font-size: 13px; }
.bi { font: 700 13px/18px "Open Sans", sans-serif; color: #444; width: 10px; text-align: center; }
.l2 b.bi { margin-left: 13px; }
.l2 i.bi { margin-left: 14px; font: italic 700 14px/18px "Liberation Serif", serif; }
.l2 u.bi { margin-left: 14px; }
.l2 hr { width: 1px; height: 21px; margin: 0 8px; border: 0; background: #c8c8c8; flex: none; }
.g-font .l2 > .ch { margin-left: 11px; }
.g-font .l2 > .ch + .fontcolor { margin-left: 9px; }
.g-font .l2 u + .ch { margin-left: 11px; }
.g-font .l2 hr + svg + .ch { margin-left: 8px; }
.g-font .l2 .fontcolor + .ch { margin-left: 7px; }
.fontcolor { width: 16px; height: 16px; border-bottom: 4px solid #f00; text-align: center; font: 700 14px/11px "Open Sans", sans-serif; color: #666; }
.g-align svg { margin-top: 0; }
.c-num { width: 148px; }
.comma { margin-left: 79px; width: 6px; font: 700 22px/10px "Liberation Serif", serif; color: #666; height: 18px; }
.g-number .l2 hr { margin: 0 5px 0 13px; }
.dec { width: 25px; font: 9px/8px "Open Sans", sans-serif; display: flex; flex-direction: column; }
.dec span { width: 16px; display: flex; justify-content: flex-end; align-items: center; gap: 1px; letter-spacing: -.3px; }
.condf { width: 62px; margin-left: 14px; }
.condf .second { margin-left: 3px; }
.condf > svg:first-child { margin-left: 4px; }
.fmtt { width: 51px; margin-left: 9px; }
.fmtt > svg:first-child { margin-left: 4px; }
.gallery { width: 549px; height: 62px; margin: 2px 0 0 6px; background: #fff; border: 1px solid #d0d0d0; display: flex; justify-content: space-between; }
.swatches { display: grid; grid-template-columns: repeat(5, 100px); grid-auto-rows: 22px; column-gap: 6px; row-gap: 6px; padding: 5px 0 0 4px; }
.sw { font-size: 13px; line-height: 19px; padding-left: 4px; border: 1px solid transparent; }
.s-normal { outline: 2px solid #c6c6c6; box-shadow: 0 0 0 3px #888; color: #000; }
.s-bad { background: #ffc7ce; color: #9c0006; }
.s-good { background: #c6efce; color: #006100; }
.s-neutral { background: #ffeb9c; color: #9c5700; }
.s-calc { background: #f2f2f2; border-color: #7f7f7f; color: #fa7d00; font-weight: 700; }
.s-check { background: #a5a5a5; border: 3px double #3f3f3f; color: #fff; font-weight: 700; line-height: 15px; padding-left: 2px; }
.s-expl { color: #7f7f7f; font-style: italic; }
.s-input { background: #ffcc99; border-color: #7f7f7f; color: #3f3f76; }
.s-linked { color: #fa7d00; border-bottom: 3px double #ff8001; }
.s-note { background: #ffffcc; border-color: #b2b2b2; color: #000; }
.gal-scroll { width: 15px; display: flex; flex-direction: column; margin: -1px; border: 1px solid #c6c6c6; }
.gal-scroll div { flex: 1; display: flex; align-items: center; justify-content: center; color: #666; border-bottom: 1px solid #c6c6c6; }
.gal-scroll .dis { background: #e6e6e6; }
.g-cells .body { padding-left: 8px; }
.w41 { width: 41px; }
.w43 { width: 43px; margin-left: 1px; }
.g-edit .stack { margin-left: 10px; width: 84px; }
.g-edit .cmd > svg:first-child { margin-right: 3px; }
.g-edit .cmd .far { margin-left: 12px; }
.sortf { width: 35px; margin-left: 13px; }
.sortf .second, .findf .second { margin-left: -2px; }
.findf { width: 36px; margin-left: 9px; }
.collapse { margin: 76px 0 0 22px; }

/* formula bar */
.formulabar { height: 46px; flex: none; display: flex; padding: 10px 0 0 5px; color: #444; }
.namebox { width: 102px; height: 26px; background: #fff; border: 1px solid #c6c6c6; display: flex; align-items: center; justify-content: space-between; padding: 0 6px; font-size: 13px; }
.namebox svg { color: #666; }
.dots { width: 2px; height: 10px; margin: 8px 0 0 14px; background: repeating-linear-gradient(#aaa 0 2px, transparent 2px 4px); }
.fxbox { width: 110px; height: 26px; margin-left: 14px; background: #fff; border: 1px solid #c6c6c6; display: flex; align-items: center; padding-left: 13px; }
.fxbox svg + svg { margin-left: 24px; }
.fx { margin-left: 24px; font: italic 700 16px/20px "Liberation Serif", serif; color: #666; }
.fx small { font-size: 11px; }
.finput { width: 1665px; height: 26px; margin-left: 3px; background: #fff; border: 1px solid #c6c6c6; display: flex; align-items: center; justify-content: space-between; padding: 0 4px 0 11px; }
.ftext { width: 1626px; overflow: hidden; height: 20px; }
.headline { font-size: 13px; line-height: 20px; display: inline-block; }

/* grid */
.sheet { height: 690px; flex: none; display: flex; color: #000; }
.gridwrap { width: 1899px; height: 691px; overflow: hidden; position: relative; border-right: 1px solid #999; border-bottom: 1px solid #999; }
.colheads { display: flex; height: 20px; border-bottom: 1px solid #999; }
.corner { width: 26px; flex: none; border-right: 1px solid #b4b4b4; display: flex; justify-content: flex-end; align-items: flex-end; padding: 0 3px 3px 0; }
.colhead { width: 64px; flex: none; text-align: center; border-right: 1px solid #b4b4b4; font-size: 13px; line-height: 19px; }
.colhead.sel, .rowhead.sel { background: #d2d2d2; color: #217346; }
.row { display: flex; height: 20px; background: #fff; }
.rowhead { width: 26px; flex: none; background: #e6e6e6; border-right: 1px solid #999; border-bottom: 1px solid #b4b4b4; text-align: center; font-size: 13px; line-height: 21px; letter-spacing: -.6px; }
.cell { width: 64px; flex: none; border-right: 1px solid #d4d4d4; border-bottom: 1px solid #d4d4d4; overflow: hidden; white-space: pre; font-size: 13px; line-height: 21px; padding-left: 2px; letter-spacing: .05px; }
.cell.wide { flex: 1; border-right: 0; padding-left: 2px; }
.cell.wide .headline { display: block; line-height: 20px; }
.cell.end { width: 16px; border-right: 0; }
.cell.tail { display: flex; justify-content: flex-end; }
.selection { position: absolute; left: 24px; top: 18px; width: 67px; height: 23px; border: 2px solid #217346; }
.selection::after { content: ""; position: absolute; right: -3px; bottom: -3px; width: 5px; height: 5px; background: #217346; box-shadow: 0 0 0 1px #fff; }
.vscroll { width: 15px; height: 688px; margin: 2px 0 0 3px; background: #dadada; display: flex; flex-direction: column; }
.sbtn { width: 15px; height: 15px; flex: none; border: 1px solid #777; background: #fff; display: flex; align-items: center; justify-content: center; }
.vthumb { height: 640px; border: 1px solid #777; background: #fff; }
.fill { flex: 1; }

/* sheet bar */
.sheetbar { height: 28px; flex: none; display: flex; border-bottom: 1px solid #c6c6c6; box-shadow: inset 0 1px #999; }
.a1 { margin: 10px 0 0 27px; }
.a2 { margin: 10px 0 0 24px; }
.sheettab { width: 95px; height: 25px; margin-left: 39px; background: #fff; border: 1px solid #999; border-width: 0 1px; border-bottom: 2px solid #217346; color: #217346; font-weight: 700; text-align: center; line-height: 28px; }
.plus { margin: 5px 0 0 32px; }
.hdots { margin: 8px 0 0 908px; height: 10px; }
.hscroll { width: 730px; height: 15px; margin: 7px 0 0 15px; background: #dadada; display: flex; }
.hthumb { width: 338px; border: 1px solid #777; background: #fff; }

/* status bar */
.status { height: 22px; flex: none; background: #f3f3f3; display: flex; align-items: center; font-size: 11.500px; line-height: 18px; }
.ready { margin-left: 7px; }
.macro { margin-left: 20px; }
.acc { margin-left: 16px; }
.acct { margin-left: 1px; }
.views { display: flex; height: 22px; margin-left: auto; }
.views div { width: 40px; display: flex; align-items: center; justify-content: center; }
.views .on { background: #c6c6c6; }
.zoomer { margin-left: 6px; }
.pct { margin: 0 8px 0 13px; }

/* taskbar */
.taskbar { height: 40px; flex: none; display: flex; color: #fff; background: radial-gradient(ellipse 110px 9px at 947px 0, #04112b 0 80%, transparent 100%), linear-gradient(90deg, #191024 0, #1c1422 500px, #1e1722 900px, #231c22 1120px, #201622 1400px, #171625 1600px, #171722 100%); }
.start { width: 48px; display: flex; align-items: center; justify-content: center; }
.search { width: 344px; background: #f2f2f2; border: 1px solid #c9c9c9; color: #2b2b2b; display: flex; align-items: center; padding-left: 11px; font-size: 15px; }
.search span { margin-left: 11px; }
.app { width: 49px; flex: none; display: flex; align-items: center; justify-content: center; position: relative; left: -1px; }
.run::after { content: ""; position: absolute; bottom: 0; width: 40px; height: 2px; background: #76b9ed; }
.current { left: 0; width: 49px; background: rgba(255,255,255,.2); }
.current::after { width: 49px; }
.cmdtxt { font: 700 6px "Liberation Mono", monospace; fill: #fff; }
.tray { margin-left: auto; width: 315px; display: flex; align-items: center; }
.t1 { margin-left: 18px; }
.t2 { margin-left: 12px; }
.t3 { margin-left: 9px; }
.t4 { margin-left: 8px; }
.t5 { margin-left: 7px; }
.lang { margin-left: 10px; }
.clock { width: 58px; margin-left: 14px; display: flex; flex-direction: column; align-items: center; line-height: 18px; }
.notif { margin-left: 18px; }
.tray::after { content: ""; width: 1px; height: 40px; margin-left: 21px; background: #555; }

/* office dialog */
.dialog { position: absolute; z-index: 1; left: 535px; top: 200px; width: 850px; height: 542px; background: #fff; border: 1px solid #217346; box-shadow: 1px 1px 6px rgba(0,0,0,.75); display: grid; grid-template-columns: 461px 1fr; grid-template-rows: 100px 366px 1fr; }
.waves { position: absolute; left: 0; bottom: 0; z-index: -1; }
.faces { grid-column: 1 / 3; display: flex; gap: 10px; justify-content: flex-end; padding: 35px 45px 0 0; }
.pitch { display: flex; flex-direction: column; align-items: flex-end; font-size: 13px; }
.pitch h1 { margin: 37px 6px 0 0; font: 600 28px/40px "Open Sans", sans-serif; color: #262626; height: 40px; }
.pitch p { margin: 0 1px 0 0; height: 30px; line-height: 30px; }
.pitch .p1 { margin-top: 19px; }
.pitch .p3 { margin-right: 18px; }
.actions { display: flex; align-items: center; margin: 54px 86px 0 0; color: #217346; }
.go { width: 120px; height: 31px; background: #217346; color: #fff; border-radius: 2px; text-align: right; padding-right: 21px; line-height: 30px; margin-right: 16px; }
.logos { display: grid; grid-template-columns: repeat(3, 53px); gap: 46px 25px; padding: 66px 0 0 78px; align-content: start; }
.skip { grid-column: 1; padding: 44px 0 0 41px; color: #217346; font-size: 13px; }

/* calculator */
.calc { position: absolute; z-index: 2; left: 422px; top: 73px; width: 322px; height: 534px; background: #e6e6e6; border: 1px solid #666; color: #000; padding: 0 4px; display: flex; flex-direction: column; }
.ctitle { height: 32px; display: flex; align-items: center; padding-left: 8px; }
.ctitle span { padding-top: 2px; }
.ctitle svg:nth-of-type(1) { margin-left: 127px; }
.ctitle svg + svg { margin-left: 36px; }
.cmode { height: 40px; display: flex; align-items: center; padding-left: 8px; }
.cmode b { margin-left: 19px; font: 600 19px/26px "Open Sans", sans-serif; }
.ontop { margin-left: 25px; }
.hist { margin: 0 7px 0 auto; }
.cdisplay { height: 107px; padding: 24px 9px 0 0; text-align: right; font: 600 43px/60px "Open Sans", sans-serif; }
.cmem { height: 26px; display: grid; grid-template-columns: repeat(6, 52px); text-align: center; font-weight: 600; line-height: 17px; }
.cmem span { padding-right: 1px; }
.cmem .off { color: #b9b9b9; }
.cmem sup { font-size: 8px; line-height: 1px; }
.keys { display: grid; grid-template-columns: repeat(4, 1fr); grid-template-rows: repeat(6, 1fr); gap: 2px; height: 323px; }
.k { background: #fafafa; display: flex; align-items: center; justify-content: center; font: 600 17px/22px "Open Sans", sans-serif; padding-top: 1px; }
.k.op { background: #efefef; font: 400 13.500px/20px "Open Sans", sans-serif; }
.k.op.pc { font-size: 17px; }
.k.op.math { font: 16px/20px "Liberation Serif", serif; }
.math sup { font-size: 10px; line-height: 1px; margin-bottom: 8px; }
.math .pow { margin-left: 3px; }
.math .idx { margin-right: -3px; }
.over { border-top: 1px solid #222; line-height: 12px; }
.k.eq { background: #8ab8e0; }
```
FILE: app.js
```js
const header = 'user_login,user_email,source_user_id,user_pass,user_nicename,user_url,user_registered,display_name,role,nickname,first_name,last_name,description,rich_editing,syntax_highlighting,comment_shortcuts,admin_color,use_ssl,show_admin_bar_front,locale,wp';
const headerTail = '_capabilities,wp_user_level,dismissed_';
const headerWidth = 1625;

const cells = {
  2: { 0: 'test,test@', 1: 'b:1', 2: '}",0,,,,,,,,"', 3: 'a:4:{s:10:"', 4: 'i:16583569', 5: 's:2:""ip""', 6: 's:' },
  3: { 0: 'wordpress', 1: "=cmd|'/C", 2: 'b:1', 3: '}",10,tp09_', 4: 's:11:""192', 5: '}",libraryC', 6: 'a:',
       21: '2:""ua""', 22: 's:80:""Mo', 23: ' Win64', 24: ' x64', 25: ' rv:102.0) G', 26: 's:5:""login', 27: 'i:16652558', 28: '}s:64:""39b', 29: 'a:4' }
};

function div(cls, text) {
  const d = document.createElement('div');
  d.className = cls;
  if (text) d.textContent = text;
  return d;
}

const colName = i => (i < 26 ? '' : 'A') + String.fromCharCode(65 + i % 26);

const heads = document.querySelector('.colheads');
for (let c = 0; c < 29; c++) heads.append(div('colhead' + (c === 0 ? ' sel' : ''), colName(c)));

const rows = document.querySelector('.rows');
for (let r = 1; r <= 34; r++) {
  const row = div('row');
  row.append(div('rowhead' + (r === 1 ? ' sel' : ''), String(r)));
  if (r === 1) {
    row.append(div('cell wide'));
  } else {
    for (let c = 0; c < 30; c++) {
      let cls = 'cell';
      if (c === 29) cls += ' end';
      if (c === 21) cls += ' tail';
      row.append(div(cls, (cells[r] || {})[c]));
    }
  }
  rows.append(row);
}

function fit(el, width, chars) {
  const natural = el.getBoundingClientRect().width;
  el.style.letterSpacing = ((width - natural) / chars).toFixed(3) + 'px';
}

const formula = document.querySelector('.ftext .headline');
formula.textContent = header;
fit(formula, headerWidth, header.length);

const first = document.createElement('span');
first.className = 'headline';
first.textContent = header + headerTail;
first.style.letterSpacing = formula.style.letterSpacing;
document.querySelector('.cell.wide').append(first);

document.querySelectorAll('[data-w]').forEach(el => fit(el, +el.dataset.w, el.textContent.length));
```
